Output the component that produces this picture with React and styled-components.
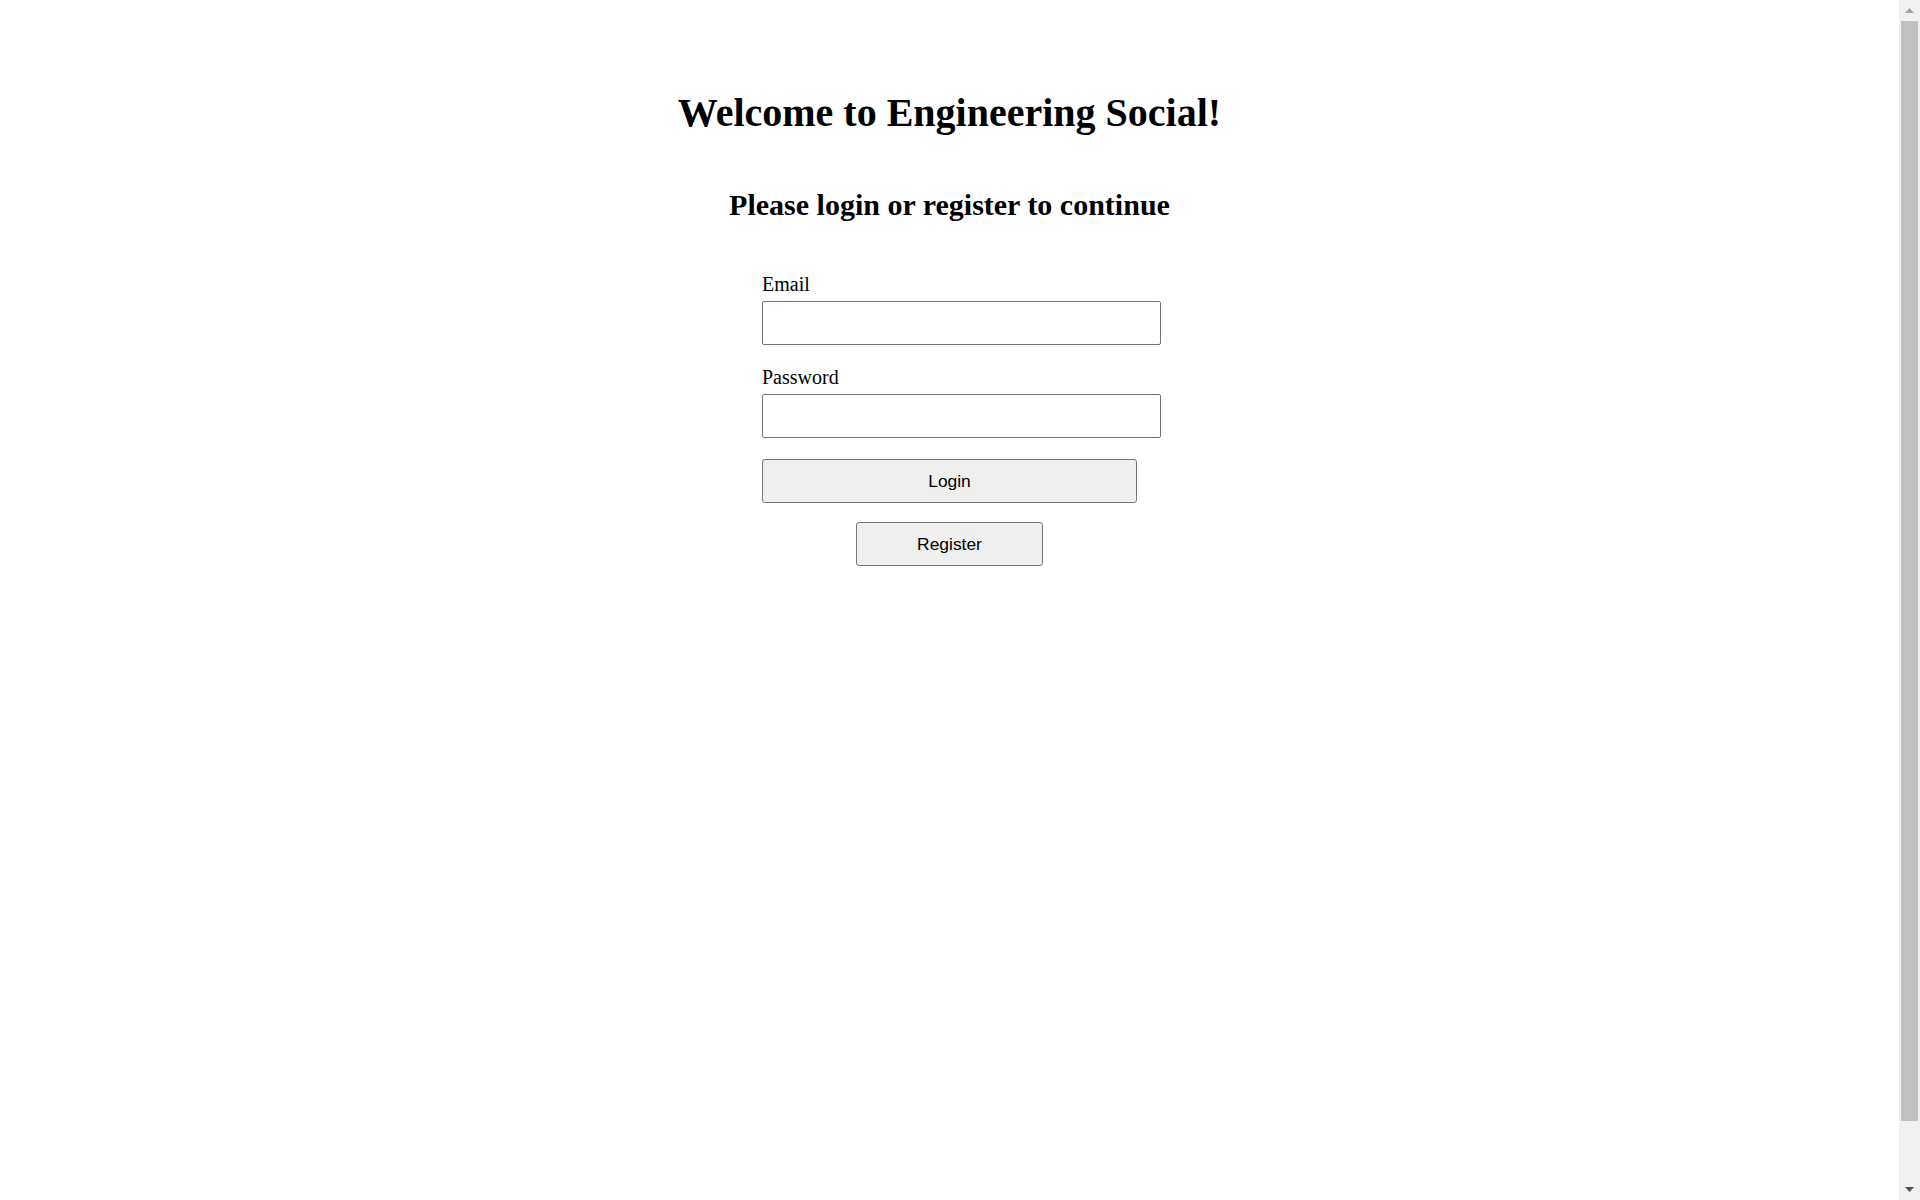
import React from "react";
import styled, { createGlobalStyle } from "styled-components";

const GlobalStyle = createGlobalStyle`
  html, body {
    margin: 0;
    padding: 0;
    background: #ffffff;
  }
  body {
    font-family: "Liberation Serif", "Times New Roman", serif;
    font-size: 20px;
    color: #000000;
  }
`;

const Shell = styled.div`
  display: flex;
  height: 100vh;
  overflow: hidden;
`;

const Page = styled.main`
  flex: 1;
  min-width: 0;
  padding-top: 63px;
  display: flex;
  flex-direction: column;
  align-items: center;
`;

const Title = styled.h1`
  margin: 27px 0 0;
  font-size: 40px;
  line-height: 46px;
  font-weight: bold;
`;

const Subtitle = styled.h2`
  margin: 52px 0 0;
  font-size: 30px;
  line-height: 34px;
  font-weight: bold;
`;

const Form = styled.form`
  width: 375px;
  margin-top: 51px;
  display: flex;
  flex-direction: column;
`;

const Field = styled.div`
  display: flex;
  flex-direction: column;
  margin-bottom: ${(p) => p.$gap}px;
`;

const Label = styled.label`
  display: block;
  font-size: 20px;
  line-height: 23px;
  margin-bottom: 5px;
`;

const Input = styled.input`
  box-sizing: border-box;
  width: 399px;
  height: 44px;
  padding: 0 11px;
  border: 1px solid #767676;
  border-radius: 2px;
  background: #ffffff;
  font-family: "Liberation Sans", Arial, sans-serif;
  font-size: 17px;
  outline: none;
`;

const Button = styled.button`
  box-sizing: border-box;
  width: ${(p) => (p.$half ? "50%" : "100%")};
  height: 44px;
  align-self: center;
  margin-top: ${(p) => p.$top}px;
  padding: 0;
  background: #efefef;
  border: 1px solid #767676;
  border-radius: 3px;
  color: #000000;
  font-family: "Liberation Sans", Arial, sans-serif;
  font-size: 17.4px;
  cursor: pointer;
`;

const ScrollTrack = styled.div`
  width: 21px;
  flex: 0 0 21px;
  height: 100vh;
  background: #f1f1f1;
  display: flex;
  flex-direction: column;
`;

const ScrollArrow = styled.div`
  height: 21px;
  flex: 0 0 21px;
  display: flex;
  align-items: center;
  justify-content: center;
`;

const ScrollThumb = styled.div`
  height: 1100px;
  margin: 0 2px;
  background: #c1c1c1;
`;

const ScrollRest = styled.div`
  flex: 1;
`;

function Arrow({ up, color }) {
  return (
    <svg width="9" height="5" viewBox="0 0 9 5">
      {up ? (
        <polygon points="0,5 4.5,0 9,5" fill={color} />
      ) : (
        <polygon points="0,0 4.5,5 9,0" fill={color} />
      )}
    </svg>
  );
}

export default function App() {
  return (
    <>
      <GlobalStyle />
      <Shell>
        <Page>
          <Title>Welcome to Engineering Social!</Title>
          <Subtitle>Please login or register to continue</Subtitle>
          <Form onSubmit={(e) => e.preventDefault()}>
            <Field $gap={21}>
              <Label htmlFor="email">Email</Label>
              <Input id="email" type="email" />
            </Field>
            <Field $gap={0}>
              <Label htmlFor="password">Password</Label>
              <Input id="password" type="password" />
            </Field>
            <Button type="submit" $top={21}>Login</Button>
            <Button type="button" $half $top={19}>Register</Button>
          </Form>
        </Page>
        <ScrollTrack aria-hidden="true">
          <ScrollArrow>
            <Arrow up color="#a3a3a3" />
          </ScrollArrow>
          <ScrollThumb />
          <ScrollRest />
          <ScrollArrow>
            <Arrow color="#505050" />
          </ScrollArrow>
        </ScrollTrack>
      </Shell>
    </>
  );
}
